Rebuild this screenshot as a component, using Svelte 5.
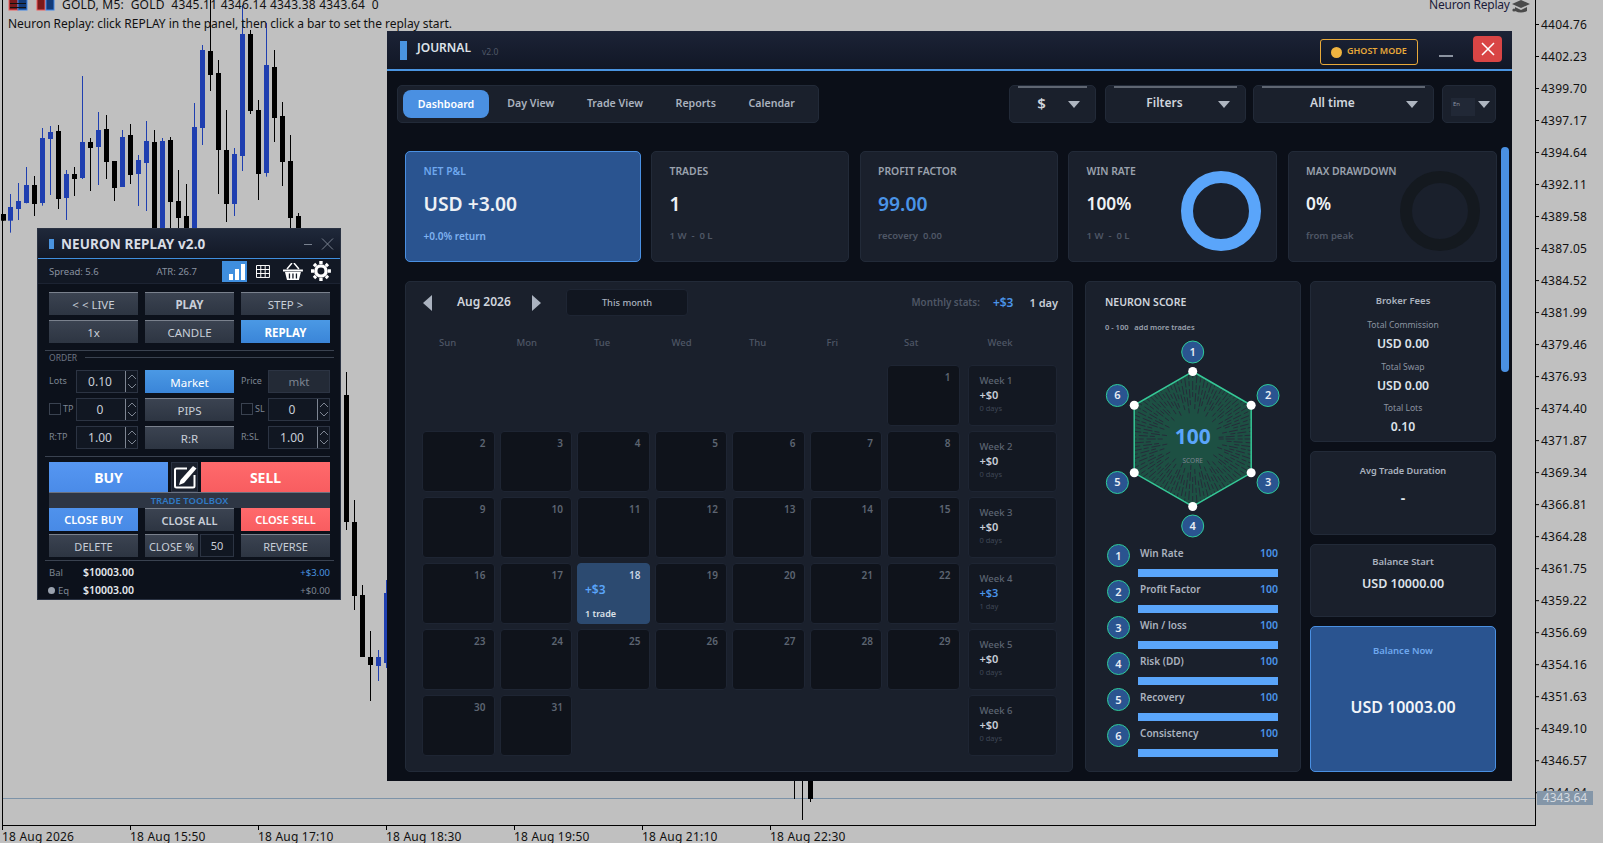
<script>
  const candles = [
    [3,642,662,642,662,0],[10,582,698,621,662,1],[18,549,660,603,627,1],[26,501,610,555,609,1],[34,528,648,555,612,0],[42,384,617,414,609,1],[50,378,585,396,417,1],[58,375,627,393,597,0],[66,510,660,522,594,1],[74,501,588,522,537,0],[82,228,537,426,534,1],[90,414,573,426,444,0],[98,336,555,390,441,1],[106,345,537,387,486,0],[114,483,603,483,564,0],[122,390,561,411,561,1],[130,372,552,405,525,0],[138,465,618,480,522,1],[146,363,633,423,489,1],[154,390,700,426,690,0],[162,414,700,423,700,1],[170,411,700,420,606,0],[178,510,700,603,654,0],[186,552,700,648,690,0],[194,309,700,381,690,1],[202,135,435,150,384,1],[210,0,273,153,225,0],[218,180,582,219,450,0],[226,330,666,450,612,0],[234,444,648,462,612,1],[242,15,513,102,468,1],[250,90,342,102,333,0],[258,300,600,330,522,0],[266,69,530,195,519,1],[274,150,426,201,354,0],[282,306,558,348,486,0],[290,405,700,483,654,0],[298,639,700,648,700,0]
  ].map(([x,a,b,c,d,k]) => ({x, wt:a/3, wb:b/3, bt:c/3, bb:d/3, k}));
  const extra = [
    {x:346,wt:372,wb:530,bt:395,bb:522,k:0},{x:354,wt:500,wb:610,bt:522,bb:596,k:0},{x:362,wt:585,wb:656,bt:595,bb:657,k:0},{x:370,wt:631,wb:701,bt:657,bb:665,k:0},{x:378,wt:650,wb:681,bt:657,bb:666,k:1},{x:386,wt:580,wb:668,bt:593,bb:663,k:1},
    {x:794,wt:770,wb:799,bt:770,bb:771,k:0},{x:802,wt:770,wb:820,bt:770,bb:771,k:0},{x:810,wt:770,wb:802,bt:770,bb:799,k:0}
  ];
  const allCandles = [...candles, ...extra];
  const prices = ['4404.76','4402.23','4399.70','4397.17','4394.64','4392.11','4389.58','4387.05','4384.52','4381.99','4379.46','4376.93','4374.40','4371.87','4369.34','4366.81','4364.28','4361.75','4359.22','4356.69','4354.16','4351.63','4349.10','4346.57','4344.04'];
  const times = ['18 Aug 2026','18 Aug 15:50','18 Aug 17:10','18 Aug 18:30','18 Aug 19:50','18 Aug 21:10','18 Aug 22:30'];
  const days = ['Sun','Mon','Tue','Wed','Thu','Fri','Sat'];
  const weeks = [
    {days:[null,null,null,null,null,null,1],p:'+$0',d:'0 days'},
    {days:[2,3,4,5,6,7,8],p:'+$0',d:'0 days'},
    {days:[9,10,11,12,13,14,15],p:'+$0',d:'0 days'},
    {days:[16,17,18,19,20,21,22],p:'+$3',d:'1 day',win:true},
    {days:[23,24,25,26,27,28,29],p:'+$0',d:'0 days'},
    {days:[30,31,null,null,null,null,null],p:'+$0',d:'0 days'}
  ];
  const scores = ['Win Rate','Profit Factor','Win / loss','Risk (DD)','Recovery','Consistency'];
  const cx = 107.7, cy = 100, R = 67.5;
  const hex = [0,1,2,3,4,5].map(i => { const a = (i*60-90)*Math.PI/180; return [cx+R*Math.cos(a), cy+R*Math.sin(a)]; });
  const hexPts = hex.map(p => p.map(v => v.toFixed(1)).join(',')).join(' ');
  const badges = [0,1,2,3,4,5].map(i => { const a=(i*60-90)*Math.PI/180; return {n:i+1, x:cx+87*Math.cos(a), y:cy+87*Math.sin(a)}; });
  const spokes = Array.from({length:96},(_,i)=>{ const a=i*3.75*Math.PI/180; const s=26+((i*7)%5)*4; return {x1:cx+s*Math.cos(a),y1:cy+s*Math.sin(a),x2:cx+70*Math.cos(a),y2:cy+70*Math.sin(a)}; });
</script>

{#snippet arrows()}
  <svg class="arrows" width="12" height="21" viewBox="0 0 12 21"><path d="M.5 0v21M3 8l4-4 4 4M3 13l4 4 4-4" fill="none" stroke="#7d8592"/></svg>
{/snippet}

<div class="desk">
  <svg class="chart" width="1603" height="843" viewBox="0 0 1603 843">
    <line x1="2.5" y1="0" x2="2.5" y2="825" stroke="#000"/>
    <line x1="1535.5" y1="0" x2="1535.5" y2="825" stroke="#000"/>
    <line x1="2" y1="825.5" x2="1536" y2="825.5" stroke="#000"/>
    <line x1="3" y1="798.5" x2="1535" y2="798.5" stroke="#7d93a8"/>
    {#each allCandles as c}
      <line x1={c.x+.5} x2={c.x+.5} y1={c.wt} y2={c.wb} stroke={c.k ? '#1f3fb0' : '#000'}/>
      {#if c.bb - c.bt > 1.5}
        <rect x={c.x-2} y={c.bt} width="5" height={c.bb-c.bt} fill={c.k ? '#1f3fb0' : '#000'}/>
      {/if}
    {/each}
    {#each prices as _, i}
      <line x1="1535" x2="1539" y1={24.5+i*32.01} y2={24.5+i*32.01} stroke="#000"/>
    {/each}
    {#each times as _, i}
      <line x1={2.5+i*128} x2={2.5+i*128} y1="825" y2="830" stroke="#000"/>
    {/each}
    <g fill="#7a1a1a" stroke="#ef5a5a">
      <rect x="9" y="-3" width="9" height="13"/><rect x="37" y="-3" width="8" height="13"/>
    </g>
    <g fill="#123a78" stroke="#3f86e8">
      <rect x="18" y="-3" width="9" height="13"/><rect x="46" y="-3" width="8" height="13"/>
    </g>
    <g stroke="#111"><line x1="10" x2="26" y1="3.5" y2="3.5"/><line x1="10" x2="26" y1="7.5" y2="7.5"/></g>
    <path d="M1512 4 L1521 0 L1530 4 L1521 8Z M1515 7 v4 q6 3 12 0 v-4 l-6 3z" fill="#4a4a4a"/>
    <circle cx="1514" cy="10" r="1.6" fill="#4a4a4a"/>
  </svg>

  <div class="chart-text">
    <div class="sym">GOLD, M5:&nbsp; GOLD&nbsp; 4345.11 4346.14 4343.38 4343.64&nbsp; 0</div>
    <div class="note">Neuron Replay: click REPLAY in the panel, then click a bar to set the replay start.</div>
    <div class="brand">Neuron Replay</div>
    {#each prices as p, i}
      <div class="price" style="top:{17+i*32.01}px">{p}</div>
    {/each}
    <div class="last">4343.64</div>
    {#each times as t, i}
      <div class="time" style="left:{2+i*128}px">{t}</div>
    {/each}
  </div>

  <!-- Replay panel -->
  <section class="replay">
    <header class="r-head">
      <i class="r-mark"></i><h1>NEURON REPLAY v2.0</h1>
      <svg class="r-win" width="30" height="14" viewBox="0 0 30 14"><path d="M0 7.500H8M18 1.500 29 12.500M29 1.500 18 12.500" stroke="#79818f" fill="none"/></svg>
    </header>
    <div class="r-stats">
      <span class="sp">Spread: 5.6</span>
      <span class="atr">ATR: 26.7</span>
      <span class="ico-on"><svg width="25" height="21" viewBox="0 0 25 21"><path d="M7 13h4v6H7zM13 8h4v11h-4zM19 3h4v16h-4z" fill="#fff"/></svg></span>
      <svg class="ico-grid" width="14" height="13" viewBox="0 0 14 13"><path d="M.5.5h13v12H.5zM.5 4.500h13M.5 8.500h13M4.800.5v12M9.200.5v12" fill="none" stroke="#fff"/></svg>
      <svg class="ico-bask" width="20" height="17" viewBox="0 0 20 17"><path d="M0 6.500h20v2H0zM2 9h16l-2 8H4z" fill="#fff"/><path d="M4 6l5-6M16 6l-5-6" stroke="#fff" stroke-width="1.500"/><path d="M6.500 10.500v5M10 10.500v5M13.500 10.500v5" stroke="#121824" stroke-width="1.300"/></svg>
      <svg class="ico-gear" width="20" height="20" viewBox="0 0 20 20"><circle cx="10" cy="10" r="5.200" fill="none" stroke="#fff" stroke-width="3.400"/><path d="M10 0v20M0 10h20M3 3l14 14M17 3 3 17" stroke="#fff" stroke-width="3.400" stroke-dasharray="3 14 3"/></svg>
    </div>
    <div class="r-body">
      <div class="g3">
        <button>&lt; &lt; LIVE</button><button class="b">PLAY</button><button>STEP &gt;</button>
        <button>1x</button><button>CANDLE</button><button class="blue b">REPLAY</button>
      </div>
      <div class="order"><span>ORDER</span><i></i></div>
      <div class="ofields">
        <div class="pair"><span class="lb">Lots</span><div class="spin">0.10{@render arrows()}</div></div>
        <button class="blue">Market</button>
        <div class="pair"><span class="lb">Price</span><div class="mkt">mkt</div></div>
        <div class="pair"><span class="lb"><b class="cb"></b>TP</span><div class="spin">0{@render arrows()}</div></div>
        <button>PIPS</button>
        <div class="pair"><span class="lb"><b class="cb"></b>SL</span><div class="spin">0{@render arrows()}</div></div>
        <div class="pair"><span class="lb">R:TP</span><div class="spin">1.00{@render arrows()}</div></div>
        <button>R:R</button>
        <div class="pair"><span class="lb">R:SL</span><div class="spin">1.00{@render arrows()}</div></div>
      </div>
      <div class="trade">
        <button class="buy">BUY</button>
        <span class="edit"><svg width="24" height="24" viewBox="0 0 24 24"><path d="M14 3.500H3.500a1.500 1.500 0 0 0-1.500 1.500V21a1.500 1.500 0 0 0 1.500 1.500H20a1.500 1.500 0 0 0 1.500-1.500V10" fill="none" stroke="#fff" stroke-width="2"/><path d="M20 1l3.500 2.500L11 18l-5 2 1.500-5z" fill="#fff"/></svg></span>
        <button class="sell">SELL</button>
      </div>
      <div class="toolbox">TRADE TOOLBOX</div>
      <div class="g3 close">
        <button class="cbuy">CLOSE BUY</button><button class="m">CLOSE ALL</button><button class="csell">CLOSE SELL</button>
        <button>DELETE</button>
        <div class="cp"><button>CLOSE %</button><span>50</span></div>
        <button>REVERSE</button>
      </div>
      <div class="bal">
        <span class="l">Bal</span><b>$10003.00</b><span class="up">+$3.00</span>
        <span class="l"><i class="dot"></i>Eq</span><b>$10003.00</b><span class="zero">+$0.00</span>
      </div>
    </div>
  </section>

  <!-- Journal -->
  <section class="journal">
    <header class="j-head">
      <i class="j-mark"></i><h2>JOURNAL</h2><small>v2.0</small>
      <div class="ghost"><i></i>GHOST MODE</div>
      <span class="min"></span>
      <span class="x"><svg width="14" height="14" viewBox="0 0 14 14"><path d="M1 1l12 12M13 1 1 13" stroke="#fff" stroke-width="1.500"/></svg></span>
    </header>
    <div class="j-body">
      <div class="toolbar">
        <nav><a class="on" href="#d">Dashboard</a><a href="#d">Day View</a><a href="#d">Trade View</a><a href="#d">Reports</a><a href="#d">Calendar</a></nav>
        <div class="drop d1"><span class="big">$</span><i></i></div>
        <div class="drop d2"><span>Filters</span><i></i></div>
        <div class="drop d3"><span>All time</span><i></i></div>
        <div class="drop d4"><u>En</u><i></i></div>
      </div>
      <div class="kpis">
        <div class="kpi k-net"><h3>NET P&amp;L</h3><strong>USD +3.00</strong><p>+0.0% return</p></div>
        <div class="kpi k-tr"><h3>TRADES</h3><strong>1</strong><p>1 W &nbsp;-&nbsp; 0 L</p></div>
        <div class="kpi k-pf"><h3>PROFIT FACTOR</h3><strong class="bl">99.00</strong><p>recovery&nbsp; 0.00</p></div>
        <div class="kpi k-wr"><div><h3>WIN RATE</h3><strong class="sm">100%</strong><p>1 W &nbsp;-&nbsp; 0 L</p></div><span class="donut full"></span></div>
        <div class="kpi k-dd"><div><h3>MAX DRAWDOWN</h3><strong class="sm">0%</strong><p>from peak</p></div><span class="donut"></span></div>
      </div>
      <div class="main">
        <div class="cal">
          <div class="cal-top">
            <svg width="9" height="16" viewBox="0 0 9 16"><path d="M9 0v16L0 8z" fill="#aab2bf"/></svg>
            <span class="mon">Aug 2026</span>
            <svg width="9" height="16" viewBox="0 0 9 16"><path d="M0 0v16L9 8z" fill="#aab2bf"/></svg>
            <button class="this">This month</button>
            <span class="ms">Monthly stats:</span><span class="ms-p">+$3</span><span class="ms-d">1 day</span>
          </div>
          <div class="cal-grid dow">
            {#each days as d}<span>{d}</span>{/each}<span class="wk">Week</span>
          </div>
          {#each weeks as w, i}
            <div class="cal-grid row">
              {#each w.days as d}
                {#if d === 18}
                  <div class="day win"><span class="n">18</span><span class="wp">+$3</span><span class="wt">1 trade</span></div>
                {:else if d}
                  <div class="day"><span class="n">{d}</span></div>
                {:else}
                  <div></div>
                {/if}
              {/each}
              <div class="week">
                <span class="wl">Week {i+1}</span>
                <span class="wv" class:bl={w.win}>{w.p}</span>
                <span class="wd">{w.d}</span>
              </div>
            </div>
          {/each}
        </div>

        <div class="score">
          <h4>NEURON SCORE</h4>
          <p class="s-sub">0 - 100 &nbsp; add more trades</p>
          <svg class="radar" width="216" height="202" viewBox="0 0 216 202">
            <defs><clipPath id="hexclip"><polygon points={hexPts}/></clipPath></defs>
            <polygon points={hexPts} fill="#1d5043"/>
            <g clip-path="url(#hexclip)" stroke="#262c3a" stroke-width="1" stroke-dasharray="5 2 9 3">
              {#each spokes as s}<line x1={s.x1} y1={s.y1} x2={s.x2} y2={s.y2}/>{/each}
            </g>
            <polygon points={hexPts} fill="none" stroke="#35c796" stroke-width="1.500"/>
            {#each hex as p}<circle cx={p[0]} cy={p[1]} r="4.500" fill="#fff"/>{/each}
            {#each badges as b}
              <circle cx={b.x} cy={b.y} r="11" fill="#2a5490" stroke="#2ecc9a"/>
              <text x={b.x} y={b.y+3.500} class="bn" text-anchor="middle">{b.n}</text>
            {/each}
            <text x={cx} y={cy+5} class="s100" text-anchor="middle">100</text>
            <text x={cx} y={cy+24} class="slab" text-anchor="middle">SCORE</text>
          </svg>
          <div class="s-list">
            {#each scores as s, i}
              <div class="s-row">
                <span class="s-n">{i+1}</span>
                <div class="s-r"><div class="s-t"><span>{s}</span><b>100</b></div><div class="s-bar"></div></div>
              </div>
            {/each}
          </div>
        </div>

        <div class="side">
          <div class="card fees">
            <h5>Broker Fees</h5>
            <span class="lab">Total Commission</span><b>USD 0.00</b>
            <span class="lab">Total Swap</span><b>USD 0.00</b>
            <span class="lab">Total Lots</span><b>0.10</b>
          </div>
          <div class="card avg"><h5>Avg Trade Duration</h5><b>-</b></div>
          <div class="card bs"><h5>Balance Start</h5><b>USD 10000.00</b></div>
          <div class="card bn-card"><h5>Balance Now</h5><b>USD 10003.00</b></div>
        </div>
      </div>
      <i class="scroll"></i>
    </div>
  </section>
</div>

<style>
  :global(body){margin:0;background:#c0c0c0;overflow:hidden}
  *{box-sizing:border-box}
  .desk{position:relative;width:1603px;height:843px;overflow:hidden;background:#c0c0c0;font-family:"Noto Sans","Open Sans",sans-serif}
  .chart{position:absolute;left:0;top:0}
  .chart-text{position:absolute;inset:0;font-family:"Noto Sans",sans-serif;font-size:12px;color:#111;white-space:nowrap}
  .chart-text>div{position:absolute;line-height:16px}
  .chart-text>.sym{left:62px;top:0;line-height:9px;letter-spacing:.22px}
  .note{left:8px;top:16px;letter-spacing:-.03px}
  .chart-text>.brand{left:1429px;top:0;line-height:9px;color:#1b1b3a;letter-spacing:-.2px}
  .price{left:1541px;letter-spacing:.25px}
  .chart-text>.last{left:1537px;top:791px;width:56px;height:14px;background:#8496a8;color:#d4dae0;line-height:14px;text-align:center}
  .chart-text>.time{top:830px;line-height:13px;letter-spacing:.2px}

  button{font:inherit;border:0;padding:0;color:#c8ced8;background:linear-gradient(#3b4351,#2d3542);border-top:1px solid #7a818d;font-size:11.500px;display:flex;align-items:center;justify-content:center}
  .replay{position:absolute;left:37px;top:228px;width:304px;height:372px;background:#0c111b;border:1px solid #2a3242;color:#c8ced8;display:flex;flex-direction:column}
  .r-head{height:30px;flex:none;display:flex;align-items:center;padding:0 6px 0 11px;background:linear-gradient(#1f283a,#121826);border-bottom:1px solid #3f8ede}
  .r-mark{width:5px;height:10px;background:#4a94e0;margin-right:7px}
  h1{margin:0;font-size:13.500px;font-weight:700;color:#d8dde5;flex:1;letter-spacing:.1px}
  .r-stats{height:25px;flex:none;display:flex;align-items:center;padding:0 9px 0 11px;font-size:9.500px;color:#8a92a0;border-bottom:1px solid #1c2332;background:#121824}
  .sp{width:108px}.atr{width:66px}
  .ico-on{width:25px;height:21px;background:#3f8ede;margin-right:9px;display:block}
  .ico-on svg,.ico-grid,.ico-bask,.ico-gear{display:block}
  .ico-grid{margin-right:13px}.ico-bask{margin-right:8px}
  .r-body{padding:8px 10px 0 11px;flex:1;display:flex;flex-direction:column}
  .g3{display:grid;grid-template-columns:89px 89px 89px;column-gap:7px;grid-auto-rows:23px;row-gap:5px}
  .b{font-weight:700}
  button.blue{background:linear-gradient(#4a98e4,#3a85d8);color:#fff;border-top:1px solid #4a98e4}
  .order{margin:7px -4px 6px;border-top:1px solid #3a4250;height:14px;display:flex;align-items:center;font-size:8.500px;color:#6e7684;gap:8px}
  .order span{margin-left:4px}.order i{flex:1;height:1px;background:#3a4250}
  .ofields{display:grid;grid-template-columns:89px 89px 89px;column-gap:7px;grid-auto-rows:23px;row-gap:5px}
  .pair{display:flex;align-items:center;justify-content:space-between}
  .lb{font-size:9px;color:#7d8592;display:flex;align-items:center;gap:2px;margin-top:-2px}
  .cb{width:12px;height:12px;border:1px solid #3a4250;display:block}
  .spin{width:62px;height:23px;border:1px solid #2c3443;background:#111722;font-size:12px;color:#c8ced8;display:flex;align-items:center;justify-content:center;padding-right:14px;position:relative}
  .arrows{position:absolute;right:0;top:0}
  .mkt{width:62px;height:23px;border:1px solid #2c3443;background:#232a36;font-size:11.500px;color:#7d8592;display:flex;align-items:center;justify-content:center}
  .trade{margin-top:13px;display:grid;grid-template-columns:119px 33px 129px;height:30px;position:relative}
  .trade::before{content:"";position:absolute;left:-4px;right:0;top:-6px;height:1px;background:#3a4250}
  .buy,.sell{color:#fff;font-weight:700;font-size:14px;border-top:0;background:linear-gradient(#5697f2,#4a8be8)}
  .sell{background:linear-gradient(#ff6a6c,#f85d60)}
  .edit{display:flex;align-items:center;justify-content:center;background:#1a202c;margin:0 3px;border:1px solid #2a3242}
  .toolbox{height:16px;background:#2e3644;border-top:1px solid #6b7280;color:#2f7ac4;font-size:9.500px;font-weight:600;text-align:center;line-height:15px}
  .close{row-gap:3px}
  .cbuy{background:linear-gradient(#4f92ec,#488ae6);color:#fff;font-weight:600;border-top:0}
  .csell{background:linear-gradient(#ff6a6c,#f85d60);color:#fff;font-weight:600;border-top:0}
  .close>button{font-size:11px}
  .close>button.m{font-weight:600}
  .cp{display:grid;grid-template-columns:53px 34px;column-gap:2px}
  .cp button{font-size:11px}
  .cp span{border:1px solid #2c3443;background:#111722;font-size:11px;display:flex;align-items:center;justify-content:center}
  .bal{margin:3px -4px 0;border-top:1px solid #3a4250;padding:2px 4px 0;display:grid;grid-template-columns:34px 1fr auto;grid-auto-rows:18px;font-size:10.500px;align-items:center}
  .bal .l{font-size:9.500px;color:#7d8592;display:flex;align-items:center;gap:3px}
  .bal b{color:#e4e8ee;font-weight:600}
  .dot{width:7px;height:7px;border-radius:50%;background:#9aa2ae;margin-left:-1px}
  .up{color:#4a94e0;font-size:9.500px}.zero{color:#7d8592;font-size:9.500px}

  .journal{position:absolute;left:387px;top:31px;width:1125px;height:750px;background:#0b0f18;display:flex;flex-direction:column;color:#c8ced8}
  .j-head{height:40px;display:flex;align-items:center;padding:0 10px 0 13px;background:linear-gradient(#1c2336,#111726);border-bottom:2px solid #4a94e0;flex:none}
  .j-mark{width:7px;height:19px;background:#4a94e0;margin-right:10px}
  h2{margin:-5px 0 0;font-size:12px;font-weight:600;color:#dde2e9}
  .j-head small{font-size:8.500px;color:#505868;margin:2px 0 0 11px;flex:1}
  .ghost{width:98px;height:26px;margin-top:4px;border:1px solid #e8a93a;border-radius:3px;color:#e8a93a;font-size:9px;font-weight:600;display:flex;align-items:center;padding:0 0 3px 10px;gap:5px;white-space:nowrap}
  .ghost i{width:11px;height:11px;border-radius:50%;background:#f0b440;margin-top:3px}
  .min{width:14px;height:2px;background:#8b93a0;margin:12px 20px 0 21px}
  .x{width:29px;height:26px;background:#d94545;border-radius:4px;display:flex;align-items:center;justify-content:center;margin-top:-3px}
  .j-body{position:relative;flex:1;padding:14px 16px 0 10px;min-height:0}
  .toolbar{display:flex;align-items:stretch;height:38px}
  nav{width:422px;margin-right:190px;background:#1a202c;border:1px solid #222a38;border-radius:5px;padding:5px;display:flex;align-items:center}
  nav a{color:#aab2bf;text-decoration:none;font-size:10.600px;font-weight:600;height:28px;display:flex;align-items:center;padding:0 16.300px 2px;border-radius:8px;white-space:nowrap}
  nav a:nth-child(2){margin-left:2px}
  nav a.on{background:#4a90e2;color:#fff;padding:0 0 1px;width:86px;justify-content:center}
  .drop{background:#1a202c;border:1px solid #222a38;border-radius:5px;display:flex;align-items:center;justify-content:flex-end;position:relative;color:#d0d5dd;font-size:12px;font-weight:600}
  .drop::before{content:"";position:absolute;left:8px;right:8px;top:0;height:2px;background:#5f6672}
  .drop span{position:absolute;left:0;right:0;top:8px;text-align:center;line-height:18px;padding-right:22px}
  .drop .big{font-size:15px}
  .drop>i{width:0;height:0;border:6px solid transparent;border-top:7px solid #aeb5c0;border-bottom:0;margin-right:5px}
  .d1{width:87px;margin-right:9px}.d1>i,.d2>i,.d3>i{margin-right:15px}
  .d2{width:141px;margin-right:7px}.d3{width:181px;margin-right:8px}
  .d4{width:54px}.d4::before{display:none}
  .d4 u{position:absolute;left:8px;top:12px;width:24px;height:18px;background:#212836;font-size:6px;font-weight:400;color:#8b93a0;text-decoration:none;padding:2px}
  .kpis{margin:28px 0 0 8px;display:grid;grid-template-columns:235.500px 198px 198px 209px 209px;column-gap:10.500px;height:111px}
  .kpi{background:#1a202c;border:1px solid #222a38;border-radius:5px;padding:12px 17.500px 0;display:flex;justify-content:space-between}
  .kpi:not(.k-wr):not(.k-dd){display:block}
  .k-net{background:#2a5490;border-color:#4a90e2}
  h3{margin:0;font-size:10.400px;font-weight:600;color:#9aa2ae;line-height:14px;white-space:nowrap}
  .kpi strong{display:block;margin-top:13px;font-size:19.300px;font-weight:600;color:#eef1f5;line-height:26px}
  .kpi strong.sm{font-size:17.300px}
  .kpi p{margin:12px 0 0;font-size:9.500px;font-weight:600;color:#4f5766;line-height:14px}
  .kpi.k-net p{font-size:10px}
  .k-net h3{color:#6fa8ee}.k-net p{color:#7fb2f0}
  strong.bl{color:#4a94e8!important}
  .donut{width:80px;height:80px;border-radius:50%;border:12.500px solid #14191f;margin:7px -2px 0 0}
  .donut.full{border-color:#5aa5fa}
  .main{margin:19px 0 0 8px;display:flex;height:491px;align-items:stretch}
  .cal{width:668px;margin-right:12px;background:#1a202c;border:1px solid #222a38;border-radius:5px;padding:7px 0 0 16px}
  .cal-top{display:flex;align-items:center;height:27px;padding:0 15px 0 1px}
  .mon{font-size:12px;font-weight:600;color:#d0d5dd;margin:-2px 22px 0 25px;width:53px;white-space:nowrap}
  .this{width:122px;height:27px;margin-left:25px;background:#111620;border:1px solid #1e2533;border-radius:4px;color:#aab2bf;font-size:9.300px;font-weight:500}
  .ms{margin-left:auto;font-size:9.800px;font-weight:600;color:#4f5766}
  .ms-p{margin:0 16px 0 13px;font-size:12px;font-weight:600;color:#4a94e8}
  .ms-d{font-size:11px;font-weight:600;color:#c8ced8;margin-right:-1px}
  .cal-grid{display:grid;grid-template-columns:72.500px 72.500px 72.500px 72.500px 72.500px 72.500px 72.500px 92px;column-gap:5px}
  .cal-grid>:last-child{margin-left:3px}
  .dow{margin-top:13px;height:35.500px;font-size:9.500px;font-weight:500;color:#4f5766;line-height:28px}
  .dow span{padding-left:17px}
  .dow .wk{padding-left:20px}
  .row{height:61px;margin-bottom:5px}
  .day{background:#0f131b;border:1px solid #1e2533;border-radius:4px;padding:4px 8px 0 7px;display:flex;flex-direction:column;position:relative}
  .n{font-size:10px;font-weight:600;color:#5d6572;text-align:right;line-height:14px}
  .win{background:#2c4a70;border-color:#2c4a70}
  .win .n{color:#c8d4e4}
  .wp{font-size:12px;font-weight:600;color:#5aa5fa;margin-top:1px;line-height:14px}
  .wt{font-size:9px;font-weight:600;color:#dde2e9;margin-top:10px;line-height:13px}
  .week{background:#131822;border:1px solid #1e2533;border-radius:4px;padding:8px 11px 0;display:flex;flex-direction:column}
  .wl{font-size:9.500px;font-weight:500;color:#5d6572;line-height:14px}
  .wv{font-size:11px;font-weight:600;color:#c8ced8;line-height:14px}
  .wv.bl{color:#4a94e8}
  .wd{font-size:7.500px;color:#3f4756;line-height:13px}

  .score{width:216px;margin-right:9px;background:#1a202c;border:1px solid #222a38;border-radius:5px;padding:12px 0 0;display:flex;flex-direction:column;overflow:hidden}
  h4{margin:0 0 0 19px;font-size:10.500px;font-weight:600;color:#d0d5dd;line-height:16px}
  .s-sub{margin:12px 0 0 19px;font-size:7.500px;font-weight:600;color:#9aa2ae;line-height:11px}
  .radar{display:block;margin:6px 0 0 -1px;flex:none}
  .bn{font:600 11px "Noto Sans",sans-serif;fill:#e8edf4}
  .s100{font:700 21px "Noto Sans",sans-serif;fill:#5aa5fa}
  .slab{font:400 6.500px "Noto Sans",sans-serif;fill:#7d8592}
  .s-list{margin-top:-3px}
  .s-row{height:36px;display:flex;padding-left:21px}
  .s-n{width:23px;height:23px;border-radius:50%;background:#2a5490;border:1px solid #2ecc9a;font-size:11px;font-weight:600;color:#e8edf4;display:flex;align-items:center;justify-content:center;margin-top:6px;flex:none}
  .s-r{width:140px;margin:7.500px 0 0 8px}
  .s-t{display:flex;justify-content:space-between;padding-left:2px;font-size:10px;font-weight:600;color:#aab2bf;line-height:14px;height:23.500px}
  .s-t b{color:#4a94e8;font-weight:600;font-size:10.500px}
  .s-bar{width:140px;height:8px;background:#5aa5fa}

  .side{display:grid;grid-template-rows:161px 84px 73px 146px;row-gap:9px;width:186px}
  .card{background:#1a202c;border:1px solid #222a38;border-radius:5px;display:flex;flex-direction:column;align-items:center;text-align:center;padding-top:11px}
  h5{margin:0;font-size:9.500px;font-weight:600;color:#aab2bf;line-height:16px}
  .card b{font-weight:600;color:#dde2e9;font-size:12.200px;line-height:18px}
  .lab{font-size:8.600px;color:#8b93a0;line-height:13px;margin-top:7.500px}
  .fees b{margin-top:3px}
  .fees h5+.lab{margin-top:10px}
  .avg h5{font-size:9.200px}
  .avg b{margin-top:9.700px;font-size:14px;font-weight:700}
  .card.bs{padding-top:8.700px}
  .bs b{font-size:12.500px;margin-top:5px}
  .bn-card{background:#2a5490;border-color:#4a90e2;padding-top:16px}
  .bn-card h5{color:#6fa8ee}
  .card.bn-card b{font-size:16px;color:#f2f5f9;margin-top:39px}
  .scroll{position:absolute;right:3px;top:76px;width:8px;height:225px;background:#4a90e2;border-radius:4px}
</style>
